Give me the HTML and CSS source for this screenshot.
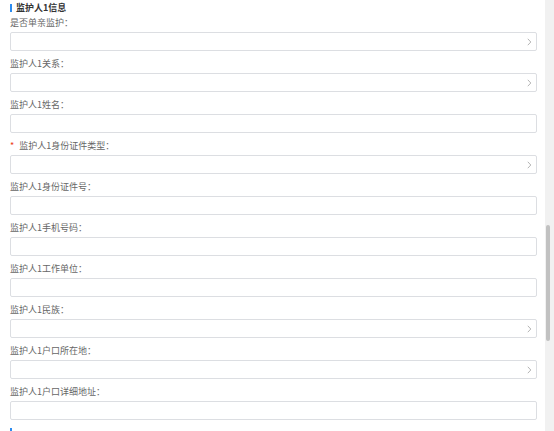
FILE: index.html
```html
<!DOCTYPE html>
<html>
  <head>
    <title>监护人信息</title>
    <meta http-equiv="content-type" content="text/html;charset=utf-8">
    <link rel="stylesheet" href="styles.css">
  </head>
  <body>
    <div class="screen">
      <div class="form">
        <div class="section">
          <div class="section-title">监护人1信息</div>
          <div class="field">
            <div class="label">是否单亲监护：</div>
            <div class="box select"><svg class="arrow" viewBox="0 0 5 8" width="5" height="8"><polyline points="0.8,0.8 3.8,4 0.8,7.2"/></svg></div>
          </div>
          <div class="field">
            <div class="label">监护人1关系：</div>
            <div class="box select"><svg class="arrow" viewBox="0 0 5 8" width="5" height="8"><polyline points="0.8,0.8 3.8,4 0.8,7.2"/></svg></div>
          </div>
          <div class="field">
            <div class="label">监护人1姓名：</div>
            <div class="box"></div>
          </div>
          <div class="field">
            <div class="label"><span class="req">*</span>监护人1身份证件类型：</div>
            <div class="box select"><svg class="arrow" viewBox="0 0 5 8" width="5" height="8"><polyline points="0.8,0.8 3.8,4 0.8,7.2"/></svg></div>
          </div>
          <div class="field">
            <div class="label">监护人1身份证件号：</div>
            <div class="box"></div>
          </div>
          <div class="field">
            <div class="label">监护人1手机号码：</div>
            <div class="box"></div>
          </div>
          <div class="field">
            <div class="label">监护人1工作单位：</div>
            <div class="box"></div>
          </div>
          <div class="field">
            <div class="label">监护人1民族：</div>
            <div class="box select"><svg class="arrow" viewBox="0 0 5 8" width="5" height="8"><polyline points="0.8,0.8 3.8,4 0.8,7.2"/></svg></div>
          </div>
          <div class="field">
            <div class="label">监护人1户口所在地：</div>
            <div class="box select"><svg class="arrow" viewBox="0 0 5 8" width="5" height="8"><polyline points="0.8,0.8 3.8,4 0.8,7.2"/></svg></div>
          </div>
          <div class="field">
            <div class="label">监护人1户口详细地址：</div>
            <div class="box"></div>
          </div>
        </div>
        <!-- next section starts just below the fold, only its marker shows -->
        <div class="section">
          <div class="section-title"></div>
        </div>
      </div>
      <div class="scrollbar">
        <div class="thumb"></div>
      </div>
    </div>
  </body>
</html>
```
FILE: styles.css
```css
body {
  margin: 0;
  background: #fff;
  font: 9px/14px "Noto Sans CJK SC", "Liberation Sans", sans-serif;
  color: #666;
  overflow: hidden;
}

.screen {
  display: flex;
  height: 431px;
  overflow: hidden;
}

.form {
  flex: 0 0 545px;
  box-sizing: border-box;
  padding: 0 8px 0 10px;
}

.section {
  padding-top: 4px;
}

.section + .section {
  margin-top: 4px;
}

.section-title {
  height: 8px;
  line-height: 8px;
  padding-left: 4px;
  border-left: 2px solid #2d8cf0;
  font-weight: bold;
  color: #333;
}

.field {
  padding-top: 6px;
}

.section-title + .field {
  padding-top: 4px;
}

.label {
  height: 14px;
  margin-bottom: 2px;
  white-space: nowrap;
}

.req {
  color: #ed4014;
  margin-right: 5px;
}

.box {
  height: 19px;
  box-sizing: border-box;
  border: 1px solid #dcdee2;
  border-radius: 2px;
  background: #fff;
}

.select {
  display: flex;
  align-items: center;
  justify-content: flex-end;
  padding-right: 4px;
}

.arrow {
  fill: none;
  stroke: #b4b4b4;
  stroke-width: 1;
}

.scrollbar {
  flex: 0 0 9px;
  background: #f1f1f1;
}

.thumb {
  width: 4px;
  height: 116px;
  margin: 225px 0 0 1px;
  border-radius: 2px;
  background: #c1c1c1;
}
```
